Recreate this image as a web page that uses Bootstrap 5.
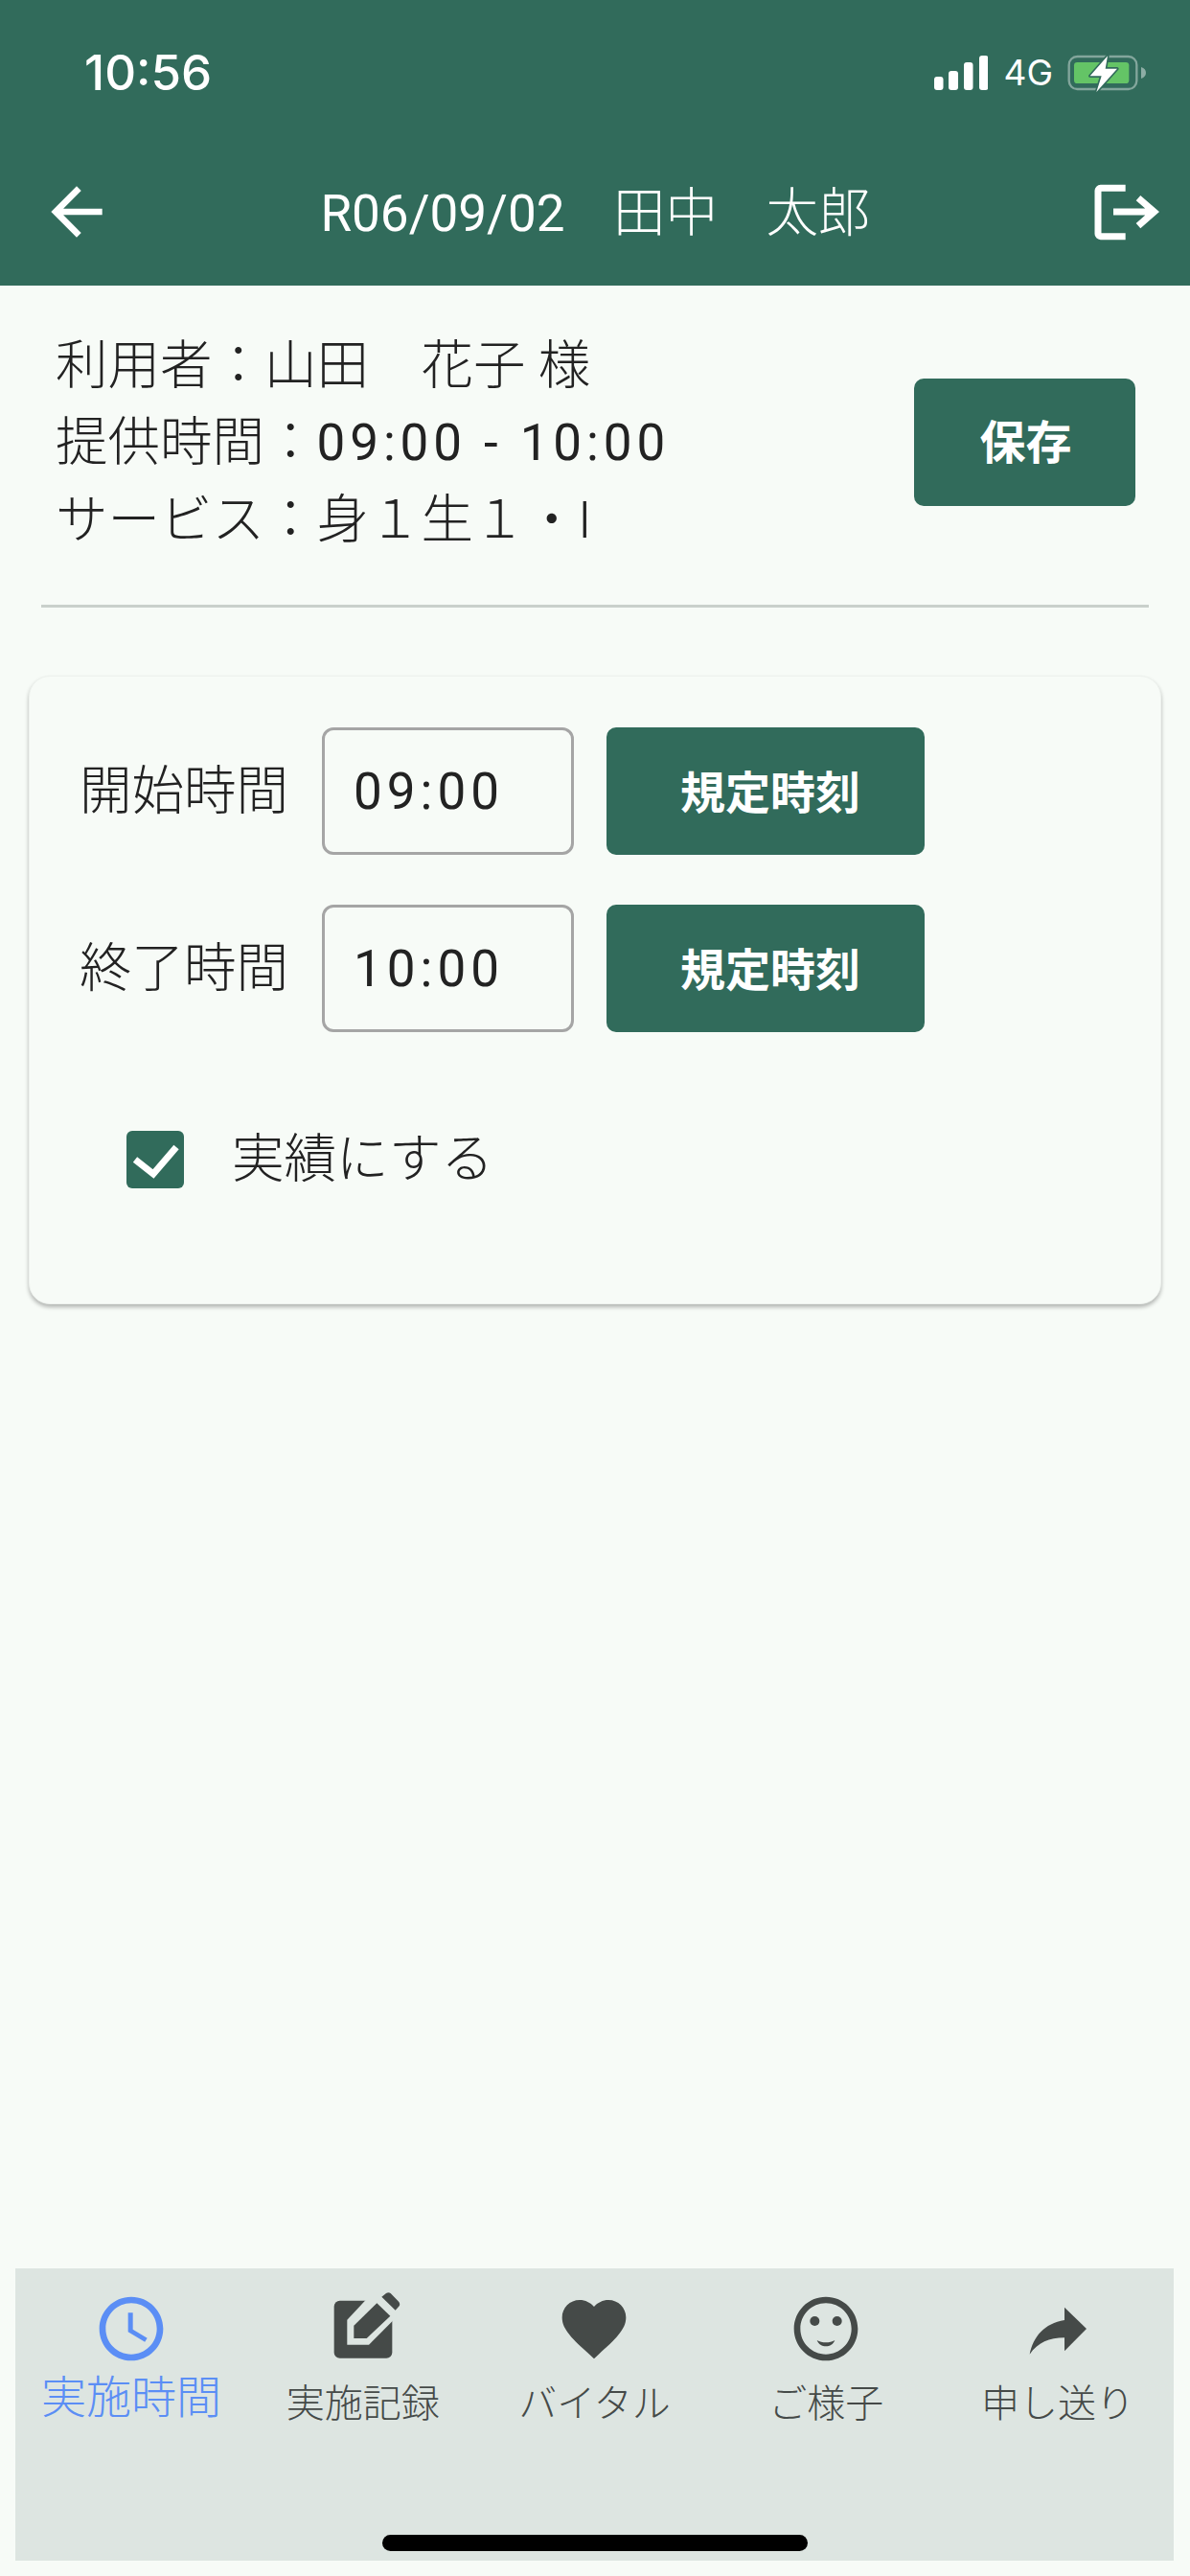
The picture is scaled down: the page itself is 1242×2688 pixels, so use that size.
<!DOCTYPE html>
<html lang="ja">
<head>
  <meta charset="UTF-8" />
  <meta name="viewport" content="width=device-width, initial-scale=1.0"/>
  <title>実施時間</title>
  <link href="https://cdn.jsdelivr.net/npm/bootstrap@5.3.3/dist/css/bootstrap.min.css" rel="stylesheet" />
  <style>
    body {
      background-color: #f7fbf7;
      color: #222;
      font-family: Roboto, "Noto Sans CJK JP", sans-serif;
      font-size: 54.5px;
      font-weight: 300;
    }
    .app-head {
      background-color: #316b5b;
      color: #fff;
      height: 298px;
    }
    .status-row {
      height: 152px;
      padding: 0 41px 0 88px;
    }
    .status-time {
      font-family: Inter, sans-serif;
      font-size: 51px;
      font-weight: 500;
    }
    .status-net {
      font-family: Inter, sans-serif;
      font-size: 37px;
      font-weight: 400;
      margin: 0 2px 0 0;
    }
    .nav-row {
      margin-top: 29px;
      padding: 0 27px 0 40px;
      height: 80px;
    }
    .nav-title {
      padding-right: 12px;
      padding-top: 2px;
      line-height: 80px;
    }
    .nav-date {
      font-size: 53px;
      font-weight: 400;
    }
    .nav-gap {
      letter-spacing: -4px;
    }
    .info-block {
      padding: 42px 57px 49px 58px;
    }
    .info-lines {
      line-height: 80px;
      padding-top: 1px;
    }
    .spaced {
      font-size: 53px;
      font-weight: 400;
      letter-spacing: 4.9px;
    }
    .btn-green {
      background-color: #316b5b;
      border: 0;
      border-radius: 10px;
      color: #fff;
      font-weight: 700;
      font-family: "Noto Sans CJK JP", sans-serif;
    }
    .btn-green:hover {
      background-color: #316b5b;
      color: #fff;
    }
    .btn-save {
      width: 231px;
      height: 133px;
      font-size: 48px;
      padding: 0 0 6px 2px;
    }
    .btn-preset {
      width: 332px;
      height: 133px;
      font-size: 47px;
      padding: 0 0 2px 10px;
    }
    .rule {
      margin: 0 43px;
      border-top: 3px solid #c9d0cb;
      opacity: 1;
    }
    .time-card {
      background-color: #f7fbf7;
      border: 1px solid #eef2ee;
      border-radius: 22px;
      box-shadow: 0 3px 4px rgba(0, 0, 0, .28);
      height: 656px;
      margin: 71px 30px 0;
      padding: 53px 0 0 52px;
    }
    .time-row {
      gap: 34px;
      margin-bottom: 52px;
    }
    .time-label {
      width: 219px;
      white-space: nowrap;
    }
    .time-input {
      width: 263px;
      height: 133px;
      background-color: transparent;
      border: 3px solid #a5a5a5;
      border-radius: 12px;
      color: #222;
      font-size: 53px;
      font-weight: 400;
      padding: 0 0 0 30px;
      letter-spacing: 5px;
    }
    .done-row {
      margin: 92px 0 0 49px;
      padding: 0;
      min-height: 0;
      gap: 50px;
    }
    .done-row .form-check-input {
      float: none;
      width: 60px;
      height: 60px;
      margin: 0;
      border: 0;
      border-radius: 6px;
    }
    .done-row .form-check-input:checked[type=checkbox] {
      background-color: #316b5b;
      background-size: 60px 60px;
      background-image: url("data:image/svg+xml,%3csvg xmlns='http://www.w3.org/2000/svg' viewBox='0 0 60 60'%3e%3cpath fill='none' stroke='%23fff' stroke-width='7' d='M9 30l19 15L52 17'/%3e%3c/svg%3e");
    }
    .tab-bar {
      position: relative;
      background-color: #dde5e1;
      height: 305px;
      margin: 0 17px 16px 16px;
      padding-top: 23px;
    }
    .tab-item {
      flex: 1 1 0;
      color: #454a48;
      font-size: 40px;
      line-height: 60px;
      text-align: center;
      white-space: nowrap;
    }
    .tab-item svg {
      display: block;
      margin: 0 auto;
    }
    .tab-item .tab-text {
      display: block;
      margin-top: 9px;
    }
    .tab-item.is-on {
      color: #5b8ef5;
      font-size: 47px;
    }
    .tab-item.is-on .tab-text {
      margin-top: 2px;
    }
    .home-bar {
      position: absolute;
      left: 383px;
      bottom: 10px;
      width: 444px;
      height: 17px;
      background: #000;
      border-radius: 9px;
    }
  </style>
</head>
<body>
  <div class="d-flex flex-column min-vh-100">
    <header class="app-head">
      <div class="status-row d-flex align-items-center justify-content-between">
        <span class="status-time">10:56</span>
        <div class="d-flex align-items-center">
          <svg width="56" height="36" viewBox="0 0 56 36" fill="#fff">
            <rect x="0" y="22" width="9.500" height="14" rx="3"/>
            <rect x="15" y="16" width="10" height="20" rx="3"/>
            <rect x="31" y="7" width="9.500" height="29" rx="3"/>
            <rect x="47" y="0" width="9.500" height="36" rx="3"/>
          </svg>
          <span class="status-net ms-3">4G</span>
          <svg width="100" height="50" viewBox="0 0 300 150">
            <rect x="44" y="24" width="212" height="102" rx="26" fill="none" stroke="#fff" stroke-opacity=".4" stroke-width="7"/>
            <path d="M270 57c10 3 15 10 15 18s-5 15-15 18z" fill="#fff" fill-opacity=".45"/>
            <rect x="60" y="42" width="172" height="66" rx="10" fill="#64c466"/>
            <path d="M165 22L110 85H146L130 135L195 62H158z" fill="#fff" stroke="#316b5b" stroke-width="10" paint-order="stroke" stroke-linejoin="round"/>
          </svg>
        </div>
      </div>
      <div class="nav-row d-flex align-items-center">
        <svg width="80" height="80" viewBox="0 0 24 24" fill="#fff"><path d="M20 11H7.830l5.590-5.590L12 4l-8 8 8 8 1.410-1.410L7.830 13H20v-2z"/></svg>
        <div class="nav-title flex-grow-1 text-center"><span class="nav-date">R06/09/02</span><span class="nav-gap">　</span>田中<span class="nav-gap">　</span>太郎</div>
        <svg width="80" height="80" viewBox="46 33 240 240" fill="none" stroke="#fff" stroke-width="21">
          <path d="M165 79H87a8 8 0 0 0-8 8V222a8 8 0 0 0 8 8h78"/>
          <path d="M127 153H255M205 110l50 43-50 44"/>
        </svg>
      </div>
    </header>

    <section class="info-block d-flex align-items-center justify-content-between">
      <div class="info-lines">
        <div>利用者：山田　花子 様</div>
        <div>提供時間：<span class="spaced">09:00 - 10:00</span></div>
        <div>サービス：身１生１・I</div>
      </div>
      <button type="button" class="btn btn-green btn-save">保存</button>
    </section>
    <hr class="rule my-0" />

    <div class="card time-card">
      <div class="time-row d-flex align-items-center">
        <label class="time-label">開始時間</label>
        <input type="text" class="form-control time-input" value="09:00" />
        <button type="button" class="btn btn-green btn-preset">規定時刻</button>
      </div>
      <div class="time-row d-flex align-items-center mb-0">
        <label class="time-label">終了時間</label>
        <input type="text" class="form-control time-input" value="10:00" />
        <button type="button" class="btn btn-green btn-preset">規定時刻</button>
      </div>
      <div class="form-check done-row d-flex align-items-center">
        <input class="form-check-input" type="checkbox" id="done" checked />
        <label class="form-check-label" for="done">実績にする</label>
      </div>
    </div>

    <div class="flex-grow-1"></div>

    <nav class="tab-bar d-flex">
      <div class="tab-item is-on">
        <svg width="80" height="80" viewBox="0 0 24 24" fill="#5b8ef5"><path d="M11.990 2C6.470 2 2 6.480 2 12s4.470 10 9.990 10C17.520 22 22 17.520 22 12S17.520 2 11.990 2zM12 20c-4.420 0-8-3.580-8-8s3.580-8 8-8 8 3.580 8 8-3.580 8-8 8z"/><path d="M12.500 7H11v6l5.250 3.150.75-1.230-4.500-2.670z"/></svg>
        <span class="tab-text">実施時間</span>
      </div>
      <div class="tab-item">
        <svg width="80" height="80" viewBox="27 30 240 240">
          <rect x="56" y="62" width="182" height="180" rx="18" fill="#454a48"/>
          <path d="M97 200V122L160 55H250V115L165 200z" fill="#dde5e1"/>
          <path d="M118 180V140L190 70 232 110 158 180z" fill="#454a48"/>
          <path d="M205 50l14-11c5-3 10-3 14 0l24 25c5 5 6 11 3 15l-12 13z" fill="#454a48"/>
        </svg>
        <span class="tab-text">実施記録</span>
      </div>
      <div class="tab-item">
        <svg width="80" height="80" viewBox="0 0 24 24" fill="#454a48"><path d="M12 21.350l-1.450-1.320C5.400 15.360 2 12.280 2 8.500 2 5.420 4.420 3 7.500 3c1.740 0 3.410.81 4.500 2.090C13.090 3.810 14.760 3 16.500 3 19.580 3 22 5.420 22 8.500c0 3.780-3.400 6.860-8.550 11.540L12 21.350z"/></svg>
        <span class="tab-text">バイタル</span>
      </div>
      <div class="tab-item">
        <svg width="80" height="80" viewBox="0 0 24 24" fill="#454a48">
          <circle cx="15.500" cy="9.600" r="1.500"/><circle cx="8.500" cy="9.600" r="1.500"/>
          <path d="M9.200 15.600C10 16.100 11 16.300 12 16.300s2-.2 2.800-.7C14.300 16.900 13.200 17.500 12 17.500s-2.300-.6-2.800-1.900z"/>
          <path d="M11.990 2C6.470 2 2 6.480 2 12s4.470 10 9.990 10C17.520 22 22 17.520 22 12S17.520 2 11.990 2zM12 20c-4.420 0-8-3.580-8-8s3.580-8 8-8 8 3.580 8 8-3.580 8-8 8z"/>
        </svg>
        <span class="tab-text">ご様子</span>
      </div>
      <div class="tab-item">
        <svg width="80" height="80" viewBox="12 15 240 240" fill="#454a48"><path d="M153 68L222 135 153 205V163C105 163 70 178 44 215 55 160 90 118 153 108z"/></svg>
        <span class="tab-text">申し送り</span>
      </div>
      <div class="home-bar"></div>
    </nav>
  </div>
</body>
</html>
